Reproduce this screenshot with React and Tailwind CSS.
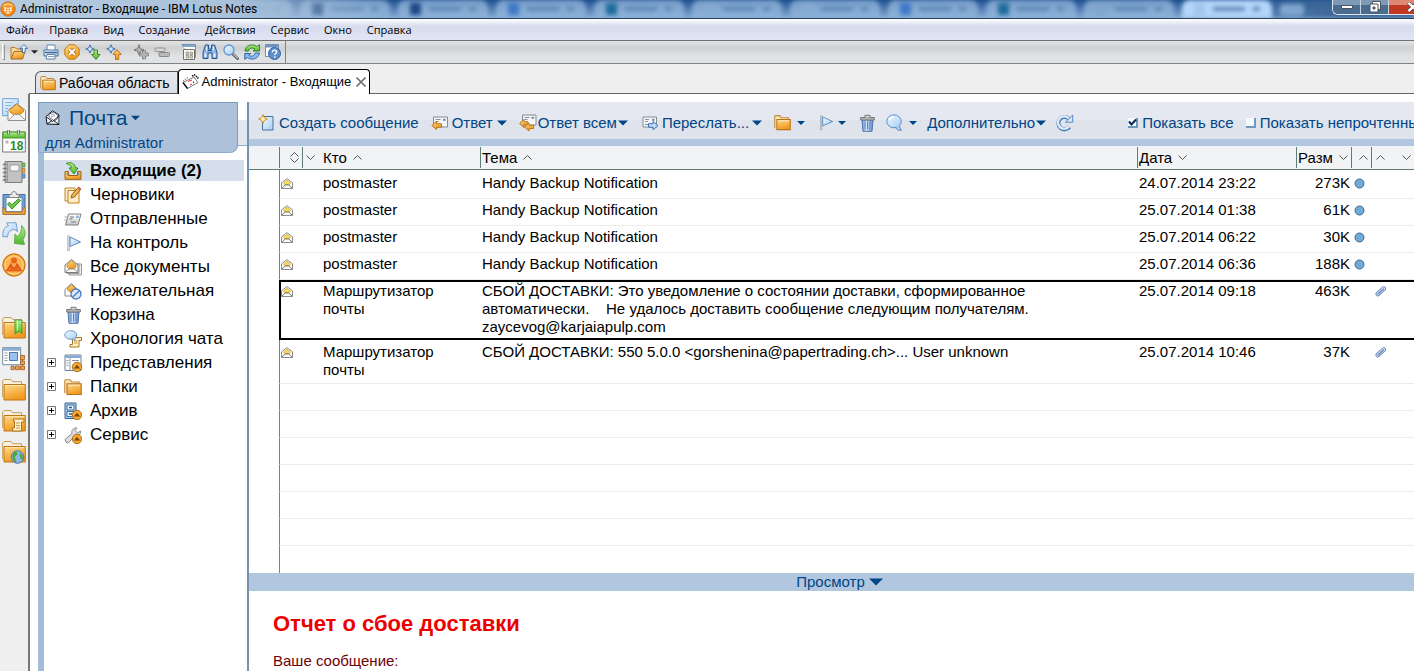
import React from "react";

/* ---------- drawing helpers ---------- */

function Svg({ s = 16, w, h, vb, children, className = "" }) {
  return (
    <svg
      width={w || s}
      height={h || s}
      viewBox={vb || `0 0 ${w || s} ${h || s}`}
      fill="none"
      aria-hidden="true"
      className={`shrink-0 ${className}`}
    >
      {children}
    </svg>
  );
}

function Gradients() {
  return (
    <svg width="0" height="0" className="absolute" aria-hidden="true">
      <defs>
        <linearGradient id="gold" x1="0" y1="0" x2="0.4" y2="1">
          <stop offset="0" stopColor="#ffd98a" />
          <stop offset="1" stopColor="#f09a1e" />
        </linearGradient>
        <linearGradient id="sky" x1="0" y1="0" x2="1" y2="1">
          <stop offset="0" stopColor="#f2f9ff" />
          <stop offset="1" stopColor="#a5cdf3" />
        </linearGradient>
        <linearGradient id="leaf" x1="0" y1="0" x2="0" y2="1">
          <stop offset="0" stopColor="#b4ee8c" />
          <stop offset="1" stopColor="#4fb52c" />
        </linearGradient>
        <linearGradient id="steel" x1="0" y1="0" x2="0" y2="1">
          <stop offset="0" stopColor="#ffffff" />
          <stop offset="1" stopColor="#c4c8cc" />
        </linearGradient>
        <linearGradient id="bin" x1="0" y1="0" x2="1" y2="0">
          <stop offset="0" stopColor="#6c96d4" />
          <stop offset="0.4" stopColor="#d5e6fa" />
          <stop offset="1" stopColor="#5f8ccc" />
        </linearGradient>
      </defs>
    </svg>
  );
}

/* ---------- window icons ---------- */

const AppIcon = () => (
  <Svg s={16}>
    <circle cx="8" cy="8" r="7.2" fill="#f08a17" stroke="#c4650a" strokeWidth=".8" />
    <path d="M2 6a6.5 6.5 0 0 1 12 0c-3-2-9-2-12 0Z" fill="#ffc471" />
    <path d="M4 6v3.5l2.5 3V6.500ZM7.200 6.600v6.300h1.600V6.600ZM12 6v3.500l-2.500 3V6.500Z" fill="#fff7e4" />
    <path d="M3 8.200h10M4 10.500h8" stroke="#f08a17" strokeWidth=".6" />
  </Svg>
);

/* ---------- toolbar icons ---------- */

const OpenIcon = () => (
  <Svg w={18} h={16}>
    <path d="M1 14V3.500h4l1.500 1.500H11v3" fill="#f6d9a4" stroke="#b97b25" />
    <path d="m1 15 3-7.500h11L12.500 15Z" fill="url(#gold)" stroke="#a8691a" />
    <path d="M12.500 9V4.500H10l4-4 3.500 4h-2.300V8Z" fill="#e5f1fc" stroke="#3a6ea8" strokeWidth=".9" />
  </Svg>
);
const PrintIcon = () => (
  <Svg>
    <path d="M4 6V1h8v5" fill="#fff" stroke="#5a87b8" />
    <path d="M1 6h14v6H1z" fill="url(#sky)" stroke="#4a6f9a" />
    <path d="M2 8.500h12" stroke="#3d6596" strokeWidth="1.500" />
    <path d="M4 10.500h8V15H3z" fill="#fff" stroke="#5f7fa5" />
    <path d="M5 12.500h6" stroke="#7fa0c8" />
  </Svg>
);
const CancelIcon = () => (
  <Svg>
    <path d="M5 .8h6L15.200 5v6L11 15.200H5L.8 11V5Z" fill="url(#gold)" stroke="#c17a16" />
    <path d="m5 5 6 6m0-6-6 6" stroke="#b06c10" strokeWidth="3.400" />
    <path d="m5 5 6 6m0-6-6 6" stroke="#fff" strokeWidth="1.800" />
  </Svg>
);
const NextIcon = () => (
  <Svg>
    <path d="m5 .8 1.200 3L9.200 5l-3 1.200L5 9.200 3.800 6.200.8 5l3-1.200Z" fill="#d6e9fc" stroke="#3d6fae" />
    <path d="M9 6h3.500v4.500H15l-4 5-4.500-5H9Z" fill="url(#leaf)" stroke="#3c8a22" />
  </Svg>
);
const PrevIcon = () => (
  <Svg>
    <path d="m5 .8 1.200 3L9.200 5l-3 1.200L5 9.200 3.800 6.200.8 5l3-1.200Z" fill="#d6e9fc" stroke="#3d6fae" />
    <path d="M9.500 15.500v-5H7l4-5 4.300 5H12.700v5Z" fill="url(#gold)" stroke="#c07418" />
  </Svg>
);
const PlusIcon = () => (
  <Svg>
    <path d="m6 .8 1.200 3.800L11 6 7.200 7.300 6 11 4.800 7.300 1 6l3.800-1.400Z" fill="#b9b9b9" stroke="#555" strokeDasharray="1.500 .7" />
    <path d="M9.500 6.500h3V9h3v3h-3v3h-3v-3h-3V9h3Z" fill="#b5b5b5" stroke="#777" strokeDasharray="1.500 .6" />
  </Svg>
);
const MinusIcon = () => (
  <Svg>
    <rect x="1" y="4" width="10" height="3.500" rx="1" fill="#d6d6d6" stroke="#949494" />
    <rect x="5" y="8.500" width="10.500" height="4" rx="1" fill="#b9b9b9" stroke="#8a8a8a" />
  </Svg>
);
const GridIcon = () => (
  <Svg>
    <path d="M.5.500h14v13h-2" fill="#fff" stroke="#7591b0" />
    <path d="M1 1h13v2H1z" fill="#87a6cc" />
    <path d="M2.500 5.500h11v10h-11z" fill="#fbfaf4" stroke="#706f67" />
    <path d="M5 8h2.500v2.500H5zM9 8h2.500v2.500H9zM5 11.500h2.500V14H5zM9 11.500h2.500V14H9z" fill="#d4d2c4" stroke="#8b897c" strokeWidth=".7" />
  </Svg>
);
const BinocularsIcon = () => (
  <Svg>
    <path d="M3.500 1h3v4h3V1h3l2.500 7.500v6h-5V9h-4v5.500H1v-6Z" fill="#8fb6e6" stroke="#23508d" />
    <path d="M2.500 9.500h2v3.500h-2zM11.500 9.500h2v3.500h-2z" fill="#e4f1ff" />
    <path d="M6 6.500h4" stroke="#23508d" />
    <path d="M4.500 2.500v4M11.500 2.500v4" stroke="#eaf4ff" />
  </Svg>
);
const MagnifierIcon = () => (
  <Svg>
    <path d="m9.500 9.500 5 5" stroke="#5c5c5c" strokeWidth="3" strokeLinecap="round" />
    <path d="m10 9.500 4.500 4.500" stroke="#b9b9b9" strokeWidth="1.200" strokeLinecap="round" />
    <circle cx="6" cy="6" r="5" fill="url(#sky)" stroke="#6395d8" strokeWidth="1.300" />
  </Svg>
);
const SyncIcon = () => (
  <Svg>
    <path d="M1 7c0-4 4-6.500 8-6 1.500.2 2.500.7 3.500 1.500L15.500.8V7H9l2-2C8.500 3.200 5 4 4.500 7Z" fill="url(#leaf)" stroke="#2e8421" />
    <path d="M15.500 9c-.5 4-4 6-7.500 6-2 0-3.500-.5-4.500-1.500L.8 15.300V9.500h6l-2 2c2.500 1.500 5.700.5 6.500-2.500Z" fill="#8bbdf2" stroke="#2d65a8" />
  </Svg>
);
const HelpIcon = () => (
  <Svg>
    <path d="M.5.500h13v12H.5z" fill="#fff" stroke="#7891ad" />
    <path d="M1 1h12v2.500H1z" fill="#6c94c8" />
    <circle cx="9.500" cy="9.500" r="6" fill="#5b8fce" stroke="#2e609f" />
    <path d="M7.500 8.200c0-2.700 4.200-2.700 4.200-.2 0 1.500-2.100 1.600-2.100 3" stroke="#fff" strokeWidth="1.400" />
    <path d="M9 12.300h1.400v1.400H9z" fill="#fff" />
  </Svg>
);

/* ---------- folder and envelope shapes ---------- */

const FolderIcon = ({ s = 16 }) => (
  <Svg s={s} vb="0 0 16 16">
    <path d="M.7 13.500V2.200L1.500 1.500h4l1.300 2H13.500V5" fill="#fbe6bd" stroke="#c08a3a" />
    <path d="M2.700 5.200h12.600v9.500H2.700Z" fill="url(#gold)" stroke="#b9741b" />
    <path d="M3.700 6.400h10.600" stroke="#ffe9bd" />
  </Svg>
);
const TabMailIcon = () => (
  <Svg s={17}>
    <path d="M1 8.500 12 3l4 5.500L5.500 14.500Z" fill="#fff" stroke="#555" strokeWidth=".8" />
    <path d="M1 8.500 5.500 14.500" stroke="#111" strokeWidth="1.400" />
    <path d="m10 2 2.500-1.200 3.500 3-1 1.500" stroke="#111" strokeWidth="1.400" strokeDasharray="1.500 .8" />
    <path d="M1 7 6 3.500" stroke="#777" strokeDasharray="1.500 .8" />
    <path d="m6 7.500 4-1.500M8 11l2-1" stroke="#d03030" />
    <path d="m11 8.500 1-.5" stroke="#333" strokeWidth="1.500" />
  </Svg>
);
const MailHeadIcon = () => (
  <Svg s={16}>
    <path d="M1 6.500 7.500.8 14 5v9.500L2 14Z" fill="#eef6ff" stroke="#111" />
    <path d="m3.500 4.500 5-2.500 4.500 3-.5 3.500-3 2.500-5-3.500Z" fill="#fff" stroke="#445" strokeWidth=".8" />
    <path d="m1.500 7 6 4.500L14 6M2 14l5-3.500M14 14.500 8.500 10.500" stroke="#111" strokeWidth=".9" />
    <path d="m6 5 3.500-1.200M6 7l4-1.500" stroke="#6a8fc0" strokeWidth=".8" />
    <path d="M15 6v8.500" stroke="#9fd0ee" />
  </Svg>
);
const RowMailIcon = () => (
  <Svg w={12} h={11}>
    <path d="M.5 4.800 6 .6l5.500 4.200v5.700H.5Z" fill="#fff" stroke="#8d8d8d" />
    <path d="M2.500 5 6 2.300 9.500 5 8 7H4Z" fill="#f5da5e" stroke="#cfa52c" strokeWidth=".7" />
    <path d="m.8 10.200 3.700-3.400h3l3.700 3.400" stroke="#777" />
  </Svg>
);

/* ---------- left rail icons, 24 px ---------- */

const RailFolder = ({ children }) => (
  <Svg s={24}>
    <path d="M.7 19V3L2 1.500h7l1.700 2.200H19.500V6" fill="#f8f0df" stroke="#c59b5a" />
    <path d="M2 6.500h21.300V22H2Z" fill="url(#gold)" stroke="#bd7719" />
    <path d="M3 7.700h19.300" stroke="#ffe7b5" />
    {children}
  </Svg>
);
const RailMail = () => (
  <Svg s={24}>
    <path d="M.7.700h15.500v17H.7Z" fill="url(#sky)" stroke="#6d9ed4" />
    <path d="M3 4.500h8M3 7.500h6M3 10.500h3M3 13.500h2" stroke="#8bb4df" />
    <path d="m6 12.500 8.700-7 8.800 7v10H6Z" fill="#fffdf7" stroke="#8e8e8e" />
    <path d="m8 11.500 6.700-5 6.700 5v2.500L17 17h-5l-4-3Z" fill="url(#gold)" stroke="#d58510" />
    <path d="m6.500 22 6-5.500h4.800l6 5.500" fill="#f1f1f1" stroke="#9b9b9b" />
  </Svg>
);
const RailCalendar = () => (
  <Svg s={24}>
    <path d="M.7 3h22.600v20H.7Z" fill="#fff" stroke="#777" />
    <path d="M1 3h22v6H1Z" fill="url(#leaf)" stroke="#4d9c2f" />
    <path d="M6.500 1v4.500M16.500 1v4.500" stroke="#5c5c5c" strokeWidth="2.400" />
    <path d="M6.500 1.300v3.900M16.500 1.300v3.900" stroke="#eee" strokeWidth=".9" />
    <path d="M3.500 11.500h3v3h-3z" fill="#b5b5b5" />
    <text x="8" y="21" fontSize="12" fontWeight="700" fill="#2d8a1f" fontFamily="Liberation Sans, sans-serif">18</text>
  </Svg>
);
const RailBook = () => (
  <Svg s={24}>
    <path d="M20 3h3v4h-3z" fill="#7dcb52" stroke="#4c9130" strokeWidth=".7" />
    <path d="M20 8.500h3v4h-3z" fill="#f6ab35" stroke="#bb7215" strokeWidth=".7" />
    <path d="M20 14h3v4h-3z" fill="#69a5e6" stroke="#3570b3" strokeWidth=".7" />
    <path d="M3 1.500h17v21H3Z" fill="#c2c2c2" stroke="#7d7d7d" />
    <path d="M5.500 1.500v21" stroke="#9a9a9a" />
    <path d="M8 5h9v6H8z" fill="#f7f7f7" stroke="#9b9b9b" />
    <path d="M.8 4.500h4M.8 8.500h4M.8 12.500h4M.8 16.500h4M.8 20h4" stroke="#7d7d7d" strokeWidth="1.500" />
  </Svg>
);
const RailTodo = () => (
  <Svg s={24}>
    <path d="M1 3.500h22v19.800H1Z" fill="#6da0dc" stroke="#44709f" />
    <path d="M1 16v7.300h22V16l-2.500 3v2h-17v-2Z" fill="#f5aa3a" stroke="#b56a15" strokeWidth=".8" />
    <path d="M4 6.500h16v14H4Z" fill="#fff" stroke="#6c86a5" />
    <path d="M7 6.500V3.500h2.500c0-4 5-4 5 0H17v3Z" fill="#e9e9e9" stroke="#808080" />
    <path d="m5.500 13 2-1.800 2.500 2.600 6.500-6 2 1.700L10 18Z" fill="#6cc944" stroke="#348e1e" />
  </Svg>
);
const RailReplicate = () => (
  <Svg s={24}>
    <path d="M.8 14.500C.5 8.500 2.500 5 6.500 3.800L4.500 1l9.500-.3 1.500 8.800-3-2C8.500 7.500 6 10 5.500 15Z" fill="url(#sky)" stroke="#6f9fd3" />
    <path d="M19.500 3.500c4 4 5 9 1.500 14l1.500 5-10-1 .5-9.500 2.500 2.500c3.500-3 4.500-7 4-11Z" fill="url(#leaf)" stroke="#67ab51" />
  </Svg>
);
const RailPeople = () => (
  <Svg s={24}>
    <circle cx="12" cy="12" r="11.200" fill="#f79a20" stroke="#c8700d" />
    <circle cx="12" cy="12" r="9.300" fill="#fcb553" stroke="#ffe0a8" />
    <circle cx="12" cy="7.500" r="3" fill="#e8641b" />
    <path d="M7.500 18.500v-5l1.500-2.200h6l1.500 2.200v5Z" fill="#e8641b" />
    <path d="m9.500 10.500-4.500 7h3M14.500 10.500l4.500 7h-3" stroke="#d95612" strokeWidth="1.500" />
    <path d="m10.500 11 1.500 2.500L13.500 11" stroke="#ffd28d" />
  </Svg>
);
const RailPages = () => (
  <Svg s={24}>
    <path d="M.7.700h18v17H.7Z" fill="#fff" stroke="#718dab" />
    <path d="M1 1h17.400v2.800H1Z" fill="#8eaed5" />
    <path d="M2.500 6h3M2.500 8.500h3M2.500 11h3M2.500 13.500h3" stroke="#9a9a9a" />
    <path d="M7.500 5.500h8v8h-8z" fill="#9cc3ee" stroke="#4c79ac" />
    <path d="M20.500 8v13H11" stroke="#9d6a35" />
    <path d="M18.500 8.500h4v4h-4zM18.500 14h4v3.500h-4zM18.500 19h4v3.700h-4zM13.500 19h3.700v3.700h-3.700zM9 19h3v3.700H9z" fill="#e8a15a" stroke="#a45d20" strokeWidth=".8" />
  </Svg>
);

const railTop = [
  ["Почта", <RailMail />],
  ["Календарь", <RailCalendar />],
  ["Контакты", <RailBook />],
  ["Задачи", <RailTodo />],
  ["Репликация", <RailReplicate />],
  ["Сообщества", <RailPeople />],
];
const railBottom = [
  [
    "Избранное",
    <RailFolder>
      <path d="M13 4h7v14l-3-3-4 3Z" fill="url(#leaf)" stroke="#4c9d30" />
      <path d="M15.500 4.500v10" stroke="#d9f8c4" />
    </RailFolder>,
  ],
  ["Рабочая область", <RailPages />],
  ["Базы данных", <RailFolder />],
  [
    "Журнал",
    <RailFolder>
      <path d="M11.500 10h10.500v3h-2.500v9h-9v-3h2v-7h-1Z" fill="#fff2cf" stroke="#ae7315" />
      <path d="M14 14h4M14 16.500h4M14 19h4" stroke="#c99545" />
    </RailFolder>,
  ],
  [
    "Интернет",
    <RailFolder>
      <circle cx="15.500" cy="17" r="6.300" fill="#8db9e8" stroke="#55789b" />
      <path d="M12 12.500c3-1.500 4 0 3 2s-2 1-2 3 2 2 1 5c-3-1-5-6-2-10ZM18 13c2 1 3.500 4 2.500 7-2-1-3.500-4-2.500-7Z" fill="#4da53a" />
    </RailFolder>,
  ],
];

/* ---------- navigator icons, 18 px ---------- */

const NavInbox = () => (
  <Svg s={18}>
    <path d="M1 9.500h3.500v4h9v-4H17v7.800H1Z" fill="url(#gold)" stroke="#9d6116" />
    <path d="M4 13.500 3 11h2M14 13.500l1-2.500h-2" stroke="#7e7e7e" />
    <path d="M2 1.500c5-2 9 0 9.500 4.500H14l-4 6-5-6h2.500C7.500 3.500 5 2 2 1.500Z" fill="url(#leaf)" stroke="#37911e" />
  </Svg>
);
const NavDrafts = () => (
  <Svg s={18}>
    <path d="M1 2h10v13H1Z" fill="#fbeac4" stroke="#b98836" />
    <path d="M4 4.500h11V17H4Z" fill="#ffeec8" stroke="#c08020" />
    <path d="m7 12 1-3.500 6.500-7.300 2.300 2L10.500 11Z" fill="#f6b04c" stroke="#6d4a20" strokeWidth=".8" />
    <path d="m14 1.500 2.500 2" stroke="#d65a4a" strokeWidth="2" />
  </Svg>
);
const NavSent = () => (
  <Svg s={18}>
    <path d="M4.500 4H17l-3 11H1.500Z" fill="url(#steel)" stroke="#808080" />
    <path d="M6 7h4M5.500 9h3M7 12h5" stroke="#777" />
    <path d="M12.500 5.500h2.700L14.500 8h-2.700z" fill="#8fb4de" />
    <path d="M.5 7h2.500M.3 10h2" stroke="#a7a7a7" />
  </Svg>
);
const FlagIcon = ({ s = 18 }) => (
  <Svg s={s} vb="0 0 18 18">
    <path d="M4.500 1.500v15.500" stroke="#8b939b" strokeWidth="2" />
    <path d="M4.500 2v14.500" stroke="#f2f4f6" strokeWidth=".7" />
    <path d="m6 3 10.500 5L6 12.500Z" fill="url(#sky)" stroke="#4a7fb9" strokeWidth=".9" />
  </Svg>
);
const NavAll = () => (
  <Svg s={18}>
    <path d="M5 6h12.500v11H5z" fill="#eee" stroke="#999" />
    <path d="M3 6h12v9.500H3z" fill="#f5f5f5" stroke="#999" />
    <path d="m1 7 6.500-5.500L14 7v7.500H1Z" fill="#fff" stroke="#7d7d7d" />
    <path d="m3 6.500 4.500-4 4.500 4V9l-2.500 2h-4L3 9Z" fill="url(#gold)" stroke="#d08a1b" strokeWidth=".8" />
    <path d="M1.300 14 6 10.500h3.500L13.700 14" stroke="#858585" />
  </Svg>
);
const NavJunk = () => (
  <Svg s={18}>
    <path d="m1 7.500 6.500-6 6 6V14H1Z" fill="#fff" stroke="#858585" />
    <path d="m3 7 4.500-4.500L12 7 9 10H5.500Z" fill="url(#gold)" stroke="#c98925" strokeWidth=".8" />
    <circle cx="12" cy="12" r="5" fill="#d9e9fb" stroke="#4f7fbd" strokeWidth="1.400" />
    <path d="m8.700 15 6.500-6" stroke="#4f7fbd" strokeWidth="1.400" />
  </Svg>
);
const TrashIcon = ({ s = 18 }) => (
  <Svg s={s} vb="0 0 18 18">
    <path d="M4 6h11l-1 11.300H5Z" fill="url(#bin)" stroke="#4f73ab" />
    <path d="M7 7.500v8M9.500 7.500v8M12 7.500v8" stroke="#5b82bd" />
    <path d="M2.700 3.500h13.600V6H2.700Z" fill="#b5b5b5" stroke="#777" />
    <path d="M7 3.500V1.300h5v2.200" fill="#ddd" stroke="#777" />
  </Svg>
);
const NavChat = () => (
  <Svg s={18}>
    <path d="M7.500 7.500h10v3h-2.500V17H6v-2.500h2.500v-5h-1Z" fill="#fff0c9" stroke="#a97720" />
    <path d="M10 11h3.500M10 13h3.500" stroke="#c99845" />
    <ellipse cx="6.800" cy="5" rx="6" ry="4.300" fill="url(#sky)" stroke="#6b9ad2" />
    <path d="m8.500 8.500 2.500 2.300V7.800" fill="#c7e0f8" stroke="#6b9ad2" />
  </Svg>
);
const UpBadge = () => (
  <>
    <circle cx="13" cy="13" r="4.700" fill="#f7a833" stroke="#9e6414" strokeWidth=".9" />
    <path d="m9.800 14.500 3.200-3.800 3.200 3.800Z" fill="#7b4506" />
  </>
);
const NavViews = () => (
  <Svg s={18}>
    <path d="M1 1h16v15.500H1Z" fill="#fff" stroke="#6e7f90" />
    <path d="M1.500 1.500h15V4h-15Z" fill="#86aad7" />
    <path d="M6 4v12M2.500 6.500h2M2.500 9h2M2.500 11.500h2M8 6.500h7" stroke="#8d969e" />
    <UpBadge />
  </Svg>
);
const NavArchive = () => (
  <Svg s={18}>
    <path d="M1 1h11v15.500H1Z" fill="#a9caf0" stroke="#3a6397" />
    <path d="M3 3h7v5H3zM3 9.500h7v5H3z" fill="#eef6ff" stroke="#43719f" />
    <path d="M5 5.500h3M5 12h3" stroke="#2f5688" strokeWidth="1.500" />
    <UpBadge />
  </Svg>
);
const NavTools = () => (
  <Svg s={18}>
    <path d="m1 13.500 7-6C7 4.500 9.500 1.500 13 2l-2 2.500L13.500 7 16.500 5c.5 3.500-2.500 5.500-5.500 5l-7 7-2-1Z" fill="#dedede" stroke="#888" />
    <UpBadge />
  </Svg>
);

/* ---------- action bar icons ---------- */

const ComposeIcon = () => (
  <Svg s={17}>
    <path d="M4.500 2.500h10.500v13.500H4.500Z" fill="url(#sky)" stroke="#45719f" />
    <path d="m5 .6 1.300 3 3 1.400-3 1.400L5 9.400 3.700 6.400.7 5l3-1.400Z" fill="#fff3d2" stroke="#d98812" />
  </Svg>
);
const ReplyIcon = () => (
  <Svg s={17}>
    <path d="M2.500 3h14v10h-14Z" fill="#f5f6f7" stroke="#838c94" />
    <path d="M4.500 5.500h5M4.500 7.500h3" stroke="#8b9298" />
    <path d="M12 4.800h2.600v2H12z" fill="#6c8db3" />
    <path d="M.8 11.500 5.500 7.500v2.300h5v3.400h-5v2.300Z" fill="url(#gold)" stroke="#bd7417" />
  </Svg>
);
const ReplyAllIcon = () => (
  <Svg s={18}>
    <path d="M3.500 1h13.500v10H3.500Z" fill="#f5f6f7" stroke="#838c94" />
    <path d="M5.500 3.500h5M5.500 5.500h3" stroke="#8b9298" />
    <path d="M12.500 2.800h2.600v2h-2.600z" fill="#6c8db3" />
    <path d="M.6 9.500 5 5.500v2.300h4v3H5v2.700Z" fill="url(#gold)" stroke="#bd7417" />
    <path d="m5.500 13 4.500-4v2.300h4.500v3.200H10V17Z" fill="url(#gold)" stroke="#bd7417" />
  </Svg>
);
const ForwardIcon = () => (
  <Svg s={17}>
    <path d="M1 3h13.500v10H1Z" fill="#f5f6f7" stroke="#838c94" />
    <path d="M3 5.500h4M3 7.500h3M3 10.500h3" stroke="#8b9298" />
    <path d="M10 4.800h2.600v2H10z" fill="#6c8db3" />
    <path d="M6.500 9.700h4.500V7.500l5 4.200-5 4V13.200H6.500Z" fill="#bfdcf8" stroke="#3f73b0" />
  </Svg>
);
const ChatIcon = () => (
  <Svg s={17}>
    <path d="M12.500 16.200c-1-.5-2.300-1.500-3-2.700l4-1.500c.2 1.500 1 3 2 4.200Z" fill="#b5d5f5" stroke="#5485bf" />
    <ellipse cx="8" cy="7.300" rx="7.200" ry="6.500" fill="url(#sky)" stroke="#5c8fcb" />
    <path d="M3.500 6c.5-2 2-3.300 4.500-3.300" stroke="#fff" strokeWidth="1.400" />
    <path d="m10.300 13 2.600-1.600" stroke="#b5d5f5" strokeWidth="2" />
  </Svg>
);
const RefreshIcon = () => (
  <Svg s={18}>
    <path d="M13 4.800A6.200 6.200 0 1 0 13.500 13" stroke="#4c7fb8" strokeWidth="4" />
    <path d="M13.500 5.300A6.200 6.200 0 1 0 13 12.500" stroke="#e4f0fc" strokeWidth="2.200" />
    <path d="M16.700 1v7.200H9.500Z" fill="#d5e7f9" stroke="#4c7fb8" strokeWidth=".9" />
  </Svg>
);
const Caret = ({ w = 10, color = "#004585" }) => (
  <Svg w={w} h={6} vb="0 0 10 6">
    <path d="M0 .500h10l-5 5Z" fill={color} />
  </Svg>
);
const SortUp = () => (
  <Svg w={9} h={5}>
    <path d="m.5 4.500 4-4 4 4" stroke="#555" />
  </Svg>
);
const SortDown = () => (
  <Svg w={9} h={5}>
    <path d="m.5.500 4 4 4-4" stroke="#555" />
  </Svg>
);
const ClipIcon = () => (
  <Svg w={12} h={11}>
    <path d="M2.800 8 8.700 2.600" stroke="#5f82b8" strokeWidth="4.600" strokeLinecap="round" />
    <path d="M2.800 8 8.700 2.600" stroke="#dfe9f6" strokeWidth="2.800" strokeLinecap="round" />
    <path d="m3 8 5.500-5" stroke="#5f82b8" strokeWidth="1.200" strokeLinecap="round" />
  </Svg>
);

/* ---------- title bar ---------- */

const ghostTabs = [
  "bg-[#2f5f9f]",
  "bg-[#1f4a85]",
  "bg-[#1f4a85]",
  "bg-[#3f77c8]",
  "bg-[#1f6c9c]",
  "bg-[#86acd2]",
  "bg-[#86acd2]",
  "bg-[#3f77c8]",
  "bg-[#1f6c9c]",
  "bg-[#7fa6cc]",
];

function GhostTab({ icon, active }) {
  return (
    <div
      className={`flex h-full w-[90px] shrink-0 items-center gap-2 rounded-t-lg px-3 ${
        active ? "bg-[#b4d6fa]" : "bg-linear-to-b from-[#769cc6] to-[#8fb5dc]"
      }`}
    >
      <span className={`h-3 w-3 ${icon}`} />
      <span className="h-1 w-9 bg-[#5f88b6]" />
      <span className="h-1 w-2 bg-[#5f88b6]" />
    </div>
  );
}

function TitleBar() {
  return (
    <header className="relative flex h-[19px] shrink-0 items-start overflow-hidden border-b border-[#2b405c] bg-linear-to-b from-[#1f5090] to-[#86acd4]">
      <div className="absolute inset-0 flex gap-2 bg-linear-to-r from-transparent from-85% to-[#3a6494] to-95% pl-[202px] blur-[2px]">
        {ghostTabs.map((c, i) => (
          <GhostTab key={i} icon={c} />
        ))}
        <GhostTab icon="bg-[#a2c6ec]" active />
        <span className="mt-1 h-3 w-6 rounded bg-[#7fa5cd]" />
      </div>
      <div className="absolute inset-y-0 left-0 w-[380px] bg-linear-to-r from-[#b6cbe0] via-[#a9c1da] via-60% to-transparent" />
      <div className="relative flex h-[17px] min-w-0 items-center gap-1">
        <AppIcon />
        <h1 className="whitespace-nowrap font-[Roboto,'Noto_Sans',sans-serif] text-[12px] leading-4 text-black">
          Administrator - Входящие - IBM Lotus Notes
        </h1>
      </div>
      <div className="relative ml-auto flex h-[15px] w-[82px] shrink-0 overflow-hidden rounded-bl-md border-b border-l border-[#dfe8f1] bg-[#22405f]">
        <button aria-label="Свернуть" className="flex w-7 shrink-0 items-center justify-center border-r border-[#c7d4e2] bg-linear-to-b from-[#7f9ab7] from-35% to-[#4b6b8f] to-35%">
          <Svg w={12} h={6}>
            <path d="M.5 1.500h11v3H.5z" fill="#fff" stroke="#4b5361" />
          </Svg>
        </button>
        <button aria-label="Восстановить" className="flex w-7 shrink-0 items-center justify-center border-r border-[#c7d4e2] bg-linear-to-b from-[#7f9ab7] from-35% to-[#4b6b8f] to-35%">
          <Svg w={12} h={12}>
            <path d="M3.500.500h8v8h-8z" fill="#fff" stroke="#4b5361" />
            <path d="M1 3h8v8H1z" fill="#fff" stroke="#4b5361" />
            <path d="M4 6h2v2H4z" fill="#5b7a9d" stroke="#4b5361" />
          </Svg>
        </button>
        <button aria-label="Закрыть" className="flex w-[42px] shrink-0 items-center justify-start bg-linear-to-b from-[#dc8873] from-35% to-[#c03a22] to-35% pl-[18px]">
          <Svg w={12} h={10}>
            <path d="m1.500 1 9 8m0-8-9 8" stroke="#55333a" strokeWidth="4" />
            <path d="m1.500 1 9 8m0-8-9 8" stroke="#fff" strokeWidth="2.400" />
          </Svg>
        </button>
      </div>
    </header>
  );
}

/* ---------- menu and toolbar ---------- */

function MenuBar() {
  const items = ["Файл", "Правка", "Вид", "Создание", "Действия", "Сервис", "Окно", "Справка"];
  return (
    <nav className="flex h-[22px] shrink-0 items-center gap-[15px] border-b border-[#707070] bg-linear-to-b from-white via-[#d6dbee] via-35% to-[#e2e5f4] pl-[6px] font-['Open_Sans','Noto_Sans',sans-serif] text-[11px] leading-4 text-black">
      {items.map((t) => (
        <button key={t}>{t}</button>
      ))}
    </nav>
  );
}

function ToolBar() {
  const group = (list) => (
    <div className="flex gap-[5px]">
      {list.map(([label, icon]) => (
        <button key={label} aria-label={label}>
          {icon}
        </button>
      ))}
    </div>
  );
  return (
    <div className="flex h-[23px] shrink-0 border-b border-[#808284] bg-linear-to-b from-[#e3e4e5] via-[#cfd0d1] via-30% to-[#e1e2e4] to-70%">
      <div className="flex items-center gap-[11px] border-r border-[#808284] pr-1">
        <div className="flex items-center gap-[5px]">
          <span className="ml-[2px] h-4 w-[3px] border border-l-white border-t-white border-[#999]" />
          <button aria-label="Открыть" className="flex items-center gap-[3px]">
            <OpenIcon />
            <Caret w={7} color="#222" />
          </button>
          {group([
            ["Печать", <PrintIcon />],
            ["Отмена", <CancelIcon />],
            ["Следующее", <NextIcon />],
            ["Предыдущее", <PrevIcon />],
          ])}
        </div>
        {group([
          ["Развернуть", <PlusIcon />],
          ["Свернуть все", <MinusIcon />],
        ])}
        {group([
          ["Свойства", <GridIcon />],
          ["Найти", <BinocularsIcon />],
          ["Поиск", <MagnifierIcon />],
          ["Обновить", <SyncIcon />],
          ["Справка", <HelpIcon />],
        ])}
      </div>
    </div>
  );
}

function Tabs() {
  return (
    <div className="flex h-[30px] shrink-0 items-end bg-[#efefef] pl-[29px] text-black">
      <div className="h-px w-[6px] bg-[#666]" />
      <button className="flex h-[23px] items-center gap-[3px] rounded-tl-md border border-b-0 border-[#555] bg-linear-to-b from-[#e6e9ee] to-[#d9dde6] pl-1 pr-[7px] text-[14px] leading-5 shadow-[inset_0_-1px_0_#555]">
        <FolderIcon />
        Рабочая область
      </button>
      <div className="flex h-[25px] items-center gap-1 rounded-t border border-b-0 border-black bg-white pl-[3px] pr-[2px]">
        <button className="flex items-center gap-[3px] text-[13px] leading-5">
          <TabMailIcon />
          Administrator - Входящие
        </button>
        <button aria-label="Закрыть вкладку">
          <Svg w={12} h={12}>
            <path d="m1.500 1.500 9 9m0-9-9 9" stroke="#6d6d6d" strokeWidth="1.700" />
          </Svg>
        </button>
      </div>
      <div className="h-px flex-1 bg-[#666]" />
    </div>
  );
}

function Rail() {
  return (
    <aside className="flex w-[30px] shrink-0 flex-col gap-[39px] border-r-2 border-[#777] bg-[#efefef] pl-[2px] pt-1">
      {[railTop, railBottom].map((list, i) => (
        <div key={i} className="flex flex-col gap-[7px]">
          {list.map(([label, icon]) => (
            <button key={label} aria-label={label} className="h-6 w-6">
              {icon}
            </button>
          ))}
        </div>
      ))}
    </aside>
  );
}

/* ---------- mail navigator ---------- */

const navItems = [
  { t: "Входящие (2)", i: <NavInbox />, on: true },
  { t: "Черновики", i: <NavDrafts /> },
  { t: "Отправленные", i: <NavSent /> },
  { t: "На контроль", i: <FlagIcon /> },
  { t: "Все документы", i: <NavAll /> },
  { t: "Нежелательная", i: <NavJunk /> },
  { t: "Корзина", i: <TrashIcon /> },
  { t: "Хронология чата", i: <NavChat /> },
  { t: "Представления", i: <NavViews />, x: true },
  { t: "Папки", i: <FolderIcon s={18} />, x: true },
  { t: "Архив", i: <NavArchive />, x: true },
  { t: "Сервис", i: <NavTools />, x: true },
];

function Navigator() {
  return (
    <div className="flex w-[211px] shrink-0 flex-col border-r-2 border-[#7593b0]">
      <div className="flex shrink-0">
        <div className="h-[51px] w-[200px] rounded-br-lg border border-[#7b9cc1] border-b-[#8fabc9] bg-[#adc1d8] pl-[6px] text-[#004585]">
          <button className="flex h-[30px] items-center gap-2">
            <MailHeadIcon />
            <span className="flex items-center gap-1 text-[21px] leading-6">
              Почта
              <Caret w={9} />
            </span>
          </button>
          <p className="text-[15px] leading-5">для Administrator</p>
        </div>
        <div className="mt-[18px] h-[26px] flex-1 border-b border-[#8fabc9] bg-[#e3e7ef]" />
      </div>
      <ul className="flex-1 border-l-[6px] border-[#a3bdd8] pt-[7px]">
        {navItems.map((n) => (
          <li key={n.t} className="h-6 pr-[3px]">
            <div className={`flex h-[21px] items-center pl-[3px] ${n.on ? "bg-[#d4dfeb]" : ""}`}>
              {n.x ? (
                <button aria-label={`Развернуть ${n.t}`} className="mr-2 h-[9px] w-[9px]">
                  <Svg s={9}>
                    <path d="M.5.500h8v8h-8z" fill="#fff" stroke="#777" />
                    <path d="M2 4.500h5M4.500 2v5" stroke="#000" />
                  </Svg>
                </button>
              ) : (
                <span className="mr-2 w-[9px]" />
              )}
              <a href="#" className={`flex items-center gap-2 whitespace-nowrap text-[17px] leading-5 text-black ${n.on ? "font-bold" : ""}`}>
                {n.i}
                {n.t}
              </a>
            </div>
          </li>
        ))}
      </ul>
    </div>
  );
}

/* ---------- action bar ---------- */

function Action({ icon, label, text, caret, className = "" }) {
  return (
    <button aria-label={label} className={`flex shrink-0 items-center whitespace-nowrap ${className}`}>
      {icon}
      {text}
      {caret ? <Caret w={caret} /> : null}
    </button>
  );
}

function Check({ children, ...rest }) {
  return (
    <label className="flex shrink-0 items-center gap-1 whitespace-nowrap">
      <span className="relative flex">
        <input
          type="checkbox"
          className="peer h-[10px] w-[10px] appearance-none border-b-2 border-r-2 border-[#6f98bd] bg-[#f4fafe]"
          {...rest}
        />
        <svg width="10" height="10" viewBox="0 0 10 10" fill="none" aria-hidden="true" className="pointer-events-none absolute inset-0 hidden peer-checked:block">
          <path d="m1 3.500 2.500 3L8 1.500" stroke="#06284f" strokeWidth="2" />
        </svg>
      </span>
      {children}
    </label>
  );
}

function ActionBar() {
  return (
    <div className="flex h-[37px] shrink-0 items-center overflow-hidden bg-linear-to-b from-[#e5e8f1] from-50% to-[#dee3ec] to-50% pl-[9px] pt-1 text-[15px] leading-5 text-[#004585]">
      <Action icon={<ComposeIcon />} text="Создать сообщение" className="gap-1" />
      <Action icon={<ReplyIcon />} text="Ответ" caret={10} className="ml-3 gap-1" />
      <Action icon={<ReplyAllIcon />} text="Ответ всем" caret={10} className="ml-3 gap-px" />
      <Action icon={<ForwardIcon />} text="Переслать..." caret={10} className="ml-[14px] gap-[3px]" />
      <Action icon={<FolderIcon s={17} />} label="Папка" caret={8} className="ml-3 gap-[6px]" />
      <Action icon={<FlagIcon s={17} />} label="На контроль" caret={8} className="ml-3 gap-1" />
      <Action icon={<TrashIcon />} label="Удалить" className="ml-3" />
      <Action icon={<ChatIcon />} label="Чат" caret={8} className="ml-[10px] gap-[6px]" />
      <Action text="Дополнительно" caret={10} className="ml-[10px] gap-px" />
      <Action icon={<RefreshIcon />} label="Обновить представление" className="ml-[10px]" />
      <div className="ml-[54px] flex gap-3">
        <Check defaultChecked>Показать все</Check>
        <Check>Показать непрочтенные</Check>
      </div>
    </div>
  );
}

/* ---------- message list ---------- */

const messages = [
  { who: "postmaster", subject: "Handy Backup Notification", date: "24.07.2014 23:22", size: "273K", dot: true },
  { who: "postmaster", subject: "Handy Backup Notification", date: "25.07.2014 01:38", size: "61K", dot: true },
  { who: "postmaster", subject: "Handy Backup Notification", date: "25.07.2014 06:22", size: "30K", dot: true },
  { who: "postmaster", subject: "Handy Backup Notification", date: "25.07.2014 06:36", size: "188K", dot: true },
  {
    who: "Маршрутизатор почты",
    subject:
      "СБОЙ ДОСТАВКИ: Это уведомление о состоянии доставки, сформированное автоматически.\u00a0\u00a0\u00a0 Не удалось доставить сообщение следующим получателям. zaycevog@karjaiapulp.com",
    date: "25.07.2014 09:18",
    size: "463K",
    clip: true,
    selected: true,
  },
  {
    who: "Маршрутизатор почты",
    subject: "СБОЙ ДОСТАВКИ: 550 5.0.0 <gorshenina@papertrading.ch>... User unknown",
    date: "25.07.2014 10:46",
    size: "37K",
    clip: true,
  },
];

function cellStyle(m, i) {
  if (m.selected) return "border-y-2 border-black pb-[2px] align-top";
  if (m.clip) return "border-b border-b-[#ececec] pt-[3px] pb-1 align-top";
  return `border-b border-b-[#ececec] pb-[6px] align-top ${i === 0 ? "pt-1" : "pt-[2px]"}`;
}

function MessageTable() {
  const th = "h-[24px] border-b border-[#5f7d78] bg-[#f1f3f5] p-0 text-left font-normal";
  const inner = "flex h-[21px] items-center";
  const div = "border-l border-[#5f7d78]";
  return (
    <table className="w-full table-fixed border-separate border-spacing-0 text-[15px] leading-[18px] text-black">
      <colgroup>
        <col className="w-[30px]" />
        <col className="w-[23px]" />
        <col className="w-[178px]" />
        <col />
        <col className="w-[159px]" />
        <col className="w-[55px]" />
        <col className="w-[20px]" />
        <col className="w-[43px]" />
      </colgroup>
      <thead>
        <tr>
          <th className={th} aria-label="Выбор" />
          <th className={th}>
            <div className={`${inner} ${div} justify-end pr-[3px]`}>
              <Svg w={9} h={11}>
                <path d="m.5 4.500 4-4 4 4M.5 6.500l4 4 4-4" stroke="#555" />
              </Svg>
            </div>
          </th>
          <th className={th}>
            <div className={`${inner} ${div} gap-2 pl-[3px]`}>
              <SortDown />
              <span className="flex items-center gap-[6px]">
                Кто
                <SortUp />
              </span>
            </div>
          </th>
          <th className={th}>
            <div className={`${inner} ${div} gap-[6px] pl-px`}>
              Тема
              <SortUp />
            </div>
          </th>
          <th className={th}>
            <div className={`${inner} ${div} gap-[6px] pl-px`}>
              Дата
              <SortDown />
            </div>
          </th>
          <th className={th}>
            <div className={`${inner} ${div} gap-[6px] overflow-hidden pl-px`}>
              Разм
              <SortDown />
            </div>
          </th>
          <th className={th}>
            <div className={`${inner} ${div} pl-[7px]`}>
              <SortUp />
            </div>
          </th>
          <th className={th}>
            <div className={`${inner} ${div} justify-between pl-1 pr-[3px]`}>
              <SortUp />
              <SortDown />
            </div>
          </th>
        </tr>
      </thead>
      <tbody>
        {messages.map((m, i) => {
          const c = cellStyle(m, i);
          return (
            <tr key={i} aria-selected={!!m.selected}>
              <td className="p-0" />
              <td className={`${c} ${m.selected ? "border-l-2" : "border-l border-l-[#808080] pl-px"}`}>
                <div className="flex h-[18px] items-center">
                  <RowMailIcon />
                </div>
              </td>
              <td className={`${c} pl-[21px] pr-8`}>{m.who}</td>
              <td className={`${c} pl-[2px] pr-[90px]`}>{m.subject}</td>
              <td className={`${c} pl-[2px]`}>{m.date}</td>
              <td className={`${c} pr-px text-right`}>{m.size}</td>
              <td className={`${c} pl-[3px]`}>
                {m.dot && (
                  <div className="flex h-[18px] items-center">
                    <Svg s={11}>
                      <circle cx="5.500" cy="5.500" r="4.500" fill="#6eacd6" stroke="#3d6596" />
                    </Svg>
                  </div>
                )}
              </td>
              <td className={`${c} pl-1`}>
                {m.clip && (
                  <div className="flex h-[18px] items-center">
                    <ClipIcon />
                  </div>
                )}
              </td>
            </tr>
          );
        })}
        {Array.from({ length: 6 }, (_, i) => (
          <tr key={`e${i}`} aria-hidden="true">
            <td className="h-[27px] p-0" />
            <td colSpan={7} className="h-[27px] border-b border-l border-b-[#ececec] border-l-[#808080] p-0" />
          </tr>
        ))}
        <tr aria-hidden="true">
          <td className="h-[27px] p-0" />
          <td colSpan={7} className="h-[27px] border-l border-[#808080] p-0" />
        </tr>
      </tbody>
    </table>
  );
}

function Preview() {
  return (
    <section className="min-h-0 flex-1 bg-white">
      <button className="flex h-[18px] w-full items-center justify-center gap-1 bg-[#b0c7df] pl-4 text-[15px] leading-[18px] text-[#004585]">
        Просмотр
        <Svg w={14} h={8}>
          <path d="M0 .500h14l-7 7Z" fill="#004585" />
        </Svg>
      </button>
      <div className="pl-6 pt-[21px]">
        <h2 className="text-[22px] font-bold leading-6 text-[#ec0000]">Отчет о сбое доставки</h2>
        <p className="mt-[15px] text-[15px] leading-5 text-[#6e0008]">Ваше сообщение:</p>
      </div>
    </section>
  );
}

export default function App() {
  return (
    <div className="relative flex h-screen flex-col overflow-hidden bg-white font-['Liberation_Sans',Arial,sans-serif]">
      <Gradients />
      <TitleBar />
      <MenuBar />
      <ToolBar />
      <Tabs />
      <div className="flex min-h-0 flex-1">
        <Rail />
        <main className="flex min-w-0 flex-1 pl-2 pt-2">
          <Navigator />
          <div className="flex min-w-0 flex-1 flex-col">
            <ActionBar />
            <div className="h-[7px] shrink-0 bg-[#b0c7df]" />
            <MessageTable />
            <Preview />
          </div>
        </main>
      </div>
    </div>
  );
}
